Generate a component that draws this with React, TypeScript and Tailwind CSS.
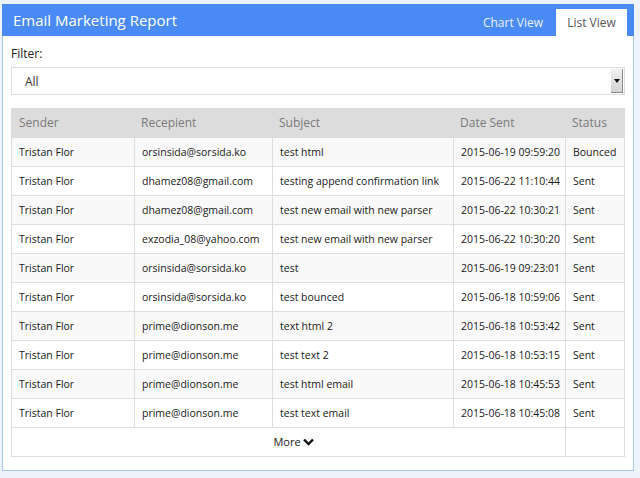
import React from "react";

const rows = [
  ["Tristan Flor", "orsinsida@sorsida.ko", "test html", "2015-06-19 09:59:20", "Bounced"],
  ["Tristan Flor", "dhamez08@gmail.com", "testing append confirmation link", "2015-06-22 11:10:44", "Sent"],
  ["Tristan Flor", "dhamez08@gmail.com", "test new email with new parser", "2015-06-22 10:30:21", "Sent"],
  ["Tristan Flor", "exzodia_08@yahoo.com", "test new email with new parser", "2015-06-22 10:30:20", "Sent"],
  ["Tristan Flor", "orsinsida@sorsida.ko", "test", "2015-06-19 09:23:01", "Sent"],
  ["Tristan Flor", "orsinsida@sorsida.ko", "test bounced", "2015-06-18 10:59:06", "Sent"],
  ["Tristan Flor", "prime@dionson.me", "text html 2", "2015-06-18 10:53:42", "Sent"],
  ["Tristan Flor", "prime@dionson.me", "test text 2", "2015-06-18 10:53:15", "Sent"],
  ["Tristan Flor", "prime@dionson.me", "test html email", "2015-06-18 10:45:53", "Sent"],
  ["Tristan Flor", "prime@dionson.me", "test text email", "2015-06-18 10:45:08", "Sent"],
];

const cols = ["w-[123px]", "w-[138px]", "w-[181px]", "w-[112px]", "w-[61px]"];
const heads = ["Sender", "Recepient", "Subject", "Date Sent", "Status"];

const App = () => {
  return (
    <div className="w-[640px] h-[478px] bg-[#eef2fa] pt-[4px] pl-[2px] font-['Open_Sans',sans-serif]">
      <div className="w-[632px] h-[467px] bg-white border border-[#a9c6f4] border-t-0">
        <div className="h-[32px] bg-[#4a8af4] flex items-end justify-between pr-[7px] -mx-px">
          <h1 className="text-white text-[15px] pl-[11px] pb-[8px] leading-none">Email Marketing Report</h1>
          <div className="flex items-end text-[12px]">
            <div className="text-[#e8f0fe] px-[13px] h-[27px] flex items-center">Chart View</div>
            <div className="bg-white text-[#555] w-[71px] h-[27px] flex items-center justify-center">List View</div>
          </div>
        </div>
        <div className="px-[8px]">
          <div className="text-[12px] text-[#222] pt-[10px] leading-[16px]">Filter:</div>
          <div className="mt-[5px] h-[28px] border border-[#ddd] flex items-center justify-between pl-[13px] pr-px">
            <span className="text-[12px] text-[#333] pt-px">All</span>
            <div className="w-[12px] h-[24px] bg-gradient-to-b from-[#f0f0f0] to-[#d4d4d4] border-r border-b border-[#888] flex items-center justify-center">
              <svg width="6" height="4" viewBox="0 0 6 4"><path d="M0 0h6L3 4z" fill="#111" /></svg>
            </div>
          </div>
          <div className="mt-[13px] border border-[#ddd] border-t-0 text-[10.5px] whitespace-nowrap">
            <div className="flex h-[30px] bg-[#dcdcdc] text-[12px] text-[#7a7a7a] -mx-px">
              {heads.map((h, i) => (
                <div key={h} className={`${cols[i]} shrink-0 ${i === 0 ? "pl-[8px]" : "pl-[7px]"} flex items-center`}>{h}</div>
              ))}
            </div>
            {rows.map((r, ri) => (
              <div key={ri} className={`flex h-[29px] border-b border-[#ddd] text-[#1a1a1a] ${ri % 2 === 0 ? "bg-[#f9f9f9]" : "bg-white"}`}>
                {r.map((c, i) => (
                  <div key={i} className={`${cols[i]} shrink-0 pl-[7px] pt-px ${i === 0 ? "-mr-px" : "border-l border-[#ddd]"} flex items-center`}>{c}</div>
                ))}
              </div>
            ))}
            <div className="flex h-[28px] text-[#222] text-[11px]">
              <div className="w-[553px] flex items-center justify-center pl-[10px] gap-[2px]">
                More
                <svg width="11" height="8" viewBox="0 0 11 8"><path d="M1 1.5l4.5 4.5L10 1.5" stroke="#111" strokeWidth="2.4" fill="none" /></svg>
              </div>
              <div className="flex-1 border-l border-[#ddd]" />
            </div>
          </div>
        </div>
      </div>
    </div>
  );
};

export default App;
